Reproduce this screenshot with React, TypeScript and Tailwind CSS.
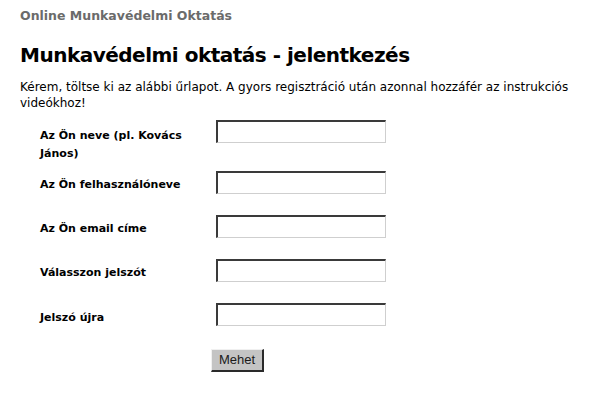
const rows = [
  { label: "Az Ön neve (pl. Kovács János)", h: "h-[51px]", pt: "pt-[7px]" },
  { label: "Az Ön felhasználóneve", h: "h-[44px]", pt: "pt-[5px]" },
  { label: "Az Ön email címe", h: "h-[44px]", pt: "pt-[5px]" },
  { label: "Válasszon jelszót", h: "h-[44px]", pt: "pt-[5px]" },
  { label: "Jelszó újra", h: "h-[44px]", pt: "pt-[6px]" },
]

export default function App() {
  return (
    <div className="w-[604px] h-[419px] bg-white px-[20px] pt-[8px] font-['DejaVu_Sans',sans-serif] text-black">
      <div className="text-[12.5px] font-bold text-[#6b6b6b] leading-[16px]">Online Munkavédelmi Oktatás</div>

      <h1 className="mt-[18px] text-[20px] tracking-[-0.5px] font-bold leading-[26px]">Munkavédelmi oktatás - jelentkezés</h1>

      <p className="mt-[11px] text-[12px] leading-[16px]">
        Kérem, töltse ki az alábbi űrlapot. A gyors regisztráció után azonnal hozzáfér az instrukciós videókhoz!
      </p>

      <form className="mt-[9px] pl-[20px]">
        {rows.map((r) => (
          <div key={r.label} className={`flex items-start ${r.h}`}>
            <label className={`w-[176px] pr-[30px] text-[11px] font-bold leading-[18px] ${r.pt}`}>{r.label}</label>
            <input
              type="text"
              className="w-[170px] h-[23px] bg-white border-t-2 border-l-2 border-r border-b border-t-[#3a3a3a] border-l-[#3a3a3a] border-r-[#cfcfcf] border-b-[#cfcfcf] outline-none"
            />
          </div>
        ))}
        <div className="pl-[171px]">
          <button
            type="button"
            className="w-[53px] h-[23px] bg-[#c4c4c4] text-[13px] font-['Liberation_Sans',sans-serif] text-[#1a1a1a] border-t border-l border-r-2 border-b-2 border-t-[#f0f0f0] border-l-[#f0f0f0] border-r-[#2a2a2a] border-b-[#2a2a2a]"
          >
            Mehet
          </button>
        </div>
      </form>
    </div>
  )
}
